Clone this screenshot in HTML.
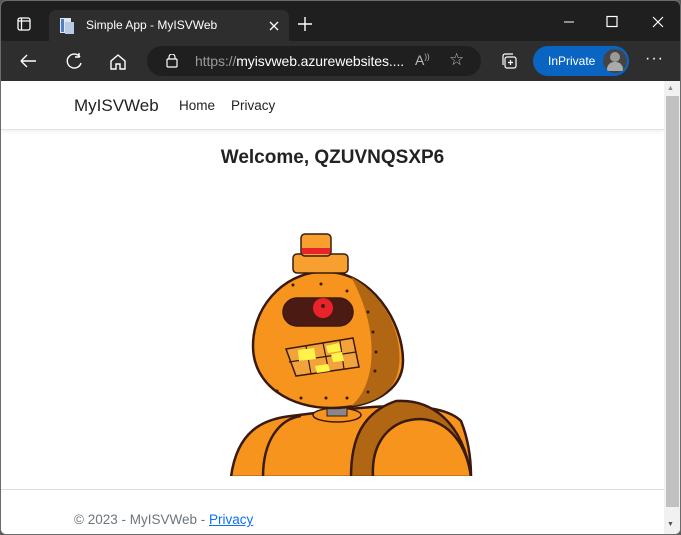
<!DOCTYPE html>
<html><head><style>
*{margin:0;padding:0;box-sizing:border-box}
body{width:681px;height:535px;overflow:hidden;background:#5a5a5a;font-family:"Liberation Sans",sans-serif;position:relative}
.win{position:absolute;left:0;top:0;width:681px;height:535px;border:1px solid #6b6b6b;border-radius:6px;overflow:hidden;background:#fff}
.title{position:absolute;left:0;top:0;width:681px;height:40px;background:#1f1f1f}
.tab{position:absolute;left:48px;top:9px;width:240px;height:31px;background:#2e2e2e;border-radius:7px 7px 0 0;color:#fff;font-size:12px;white-space:nowrap}
.tool{position:absolute;left:0;top:40px;width:681px;height:40px;background:#2e2e2e}
.url{position:absolute;left:146px;top:5px;width:334px;height:30px;background:#1f1f1f;border-radius:15px;white-space:nowrap}
.page{position:absolute;left:0;top:80px;width:663px;height:455px;background:#fff}
.nav{position:absolute;left:0;top:0;width:663px;height:49px;border-bottom:1px solid #e2e2e2;box-shadow:0 2px 4px rgba(0,0,0,.06)}
.sb{position:absolute;left:663px;top:80px;width:17px;height:455px;background:#f1f1f1}
</style></head><body>
<div class="win">
<div class="title">
 <svg style="position:absolute;left:16px;top:16px" width="14" height="14"><rect x="1" y="1" width="12" height="12" rx="2" fill="none" stroke="#fff" stroke-width="1.3"/><line x1="4.5" y1="1" x2="4.5" y2="13" stroke="#fff" stroke-width="1.3"/><line x1="1" y1="4" x2="13" y2="4" stroke="#fff" stroke-width="1.3"/></svg>
 <div class="tab">
  <svg style="position:absolute;left:11px;top:8px" width="14" height="16"><rect x="0" y="0" width="11" height="15" fill="#dfe7f3"/><rect x="5" y="4" width="9" height="12" fill="#b8cbe6"/><rect x="1" y="1" width="3" height="13" fill="#4f7fc0"/></svg>
  <span style="position:absolute;left:37px;top:8px">Simple App - MyISVWeb</span>
  <svg style="position:absolute;left:220px;top:11px" width="10" height="10"><path d="M1 1L9 9M9 1L1 9" stroke="#fff" stroke-width="1.3"/></svg>
 </div>
 <svg style="position:absolute;left:296px;top:15px" width="16" height="16"><path d="M8 1V15M1 8H15" stroke="#fff" stroke-width="1.4"/></svg>
 <svg style="position:absolute;left:560px;top:14px" width="110" height="14"><path d="M3 7H13" stroke="#fff"/><rect x="46" y="1.5" width="10" height="10" fill="none" stroke="#fff" stroke-width="1.2"/><path d="M92 2L102 12M102 2L92 12" stroke="#fff" stroke-width="1.2"/></svg>
</div>
<div class="tool">
 <svg style="position:absolute;left:18px;top:11px" width="110" height="20" fill="none" stroke="#fff" stroke-width="1.4"><path d="M2 9H17M2 9L8 3M2 9L8 15"/><path d="M61 5A7 7 0 1 0 62 11M60 1V5H56"/><path d="M92 17V9L99 3L106 9V17H101V12H97V17Z"/></svg>
 <div class="url">
  <svg style="position:absolute;left:19px;top:8px" width="12" height="14" fill="none" stroke="#fff" stroke-width="1.2"><rect x="1" y="5" width="10" height="8" rx="1"/><path d="M3 5V3A3 3 0 0 1 9 3V5"/></svg>
  <span style="position:absolute;left:48px;top:7px;font-size:14px;color:#9a9a9a;letter-spacing:-0.1px">https://<span style="color:#fff">myisvweb.azurewebsites....</span></span>
  <span style="position:absolute;left:268px;top:6px;font-size:14px;color:#bbb">A<sup style="font-size:8px">))</sup></span>
  <span style="position:absolute;left:302px;top:4px;font-size:17px;color:#bbb">☆</span>
 </div>
 <svg style="position:absolute;left:500px;top:12px" width="16" height="16" fill="none" stroke="#fff" stroke-width="1.2"><rect x="4" y="4" width="11" height="11" rx="2"/><path d="M2 12V3A2 2 0 0 1 4 1H12M9.5 7V12M7 9.5H12"/></svg>
 <div style="position:absolute;left:532px;top:5px;width:96px;height:30px;border-radius:15px;background:#0a65c2;color:#fff;font-size:12px"><span style="position:absolute;left:15px;top:8px">InPrivate</span><div style="position:absolute;left:70px;top:3px;width:24px;height:24px;border-radius:50%;background:#444;"><div style="position:absolute;left:7px;top:3px;width:10px;height:10px;border-radius:50%;background:#9a9a9a"></div><div style="position:absolute;left:4px;top:13px;width:16px;height:9px;border-radius:8px 8px 2px 2px;background:#aaa"></div></div></div>
 <span style="position:absolute;left:644px;top:9px;color:#fff;font-size:16px;letter-spacing:1px">···</span>
</div>
<div class="page">
 <div class="nav">
  <span style="position:absolute;left:73px;top:15px;font-size:17px;color:#222">MyISVWeb</span>
  <span style="position:absolute;left:178px;top:17px;font-size:13.5px;color:#222">Home</span>
  <span style="position:absolute;left:230px;top:17px;font-size:13.5px;color:#222">Privacy</span>
 </div>
 <div style="position:absolute;left:0;top:66px;width:663px;text-align:center;font-size:19px;font-weight:bold;color:#222">Welcome, QZUVNQSXP6</div>
 <svg style="position:absolute;left:0;top:0" width="663" height="395" viewBox="0 80 663 395">
  <g stroke="#3a1a10" stroke-width="2.5">
   <path d="M230 476C236 430 262 418 290 415L330 410C380 404 440 400 460 420C468 440 470 460 470 476Z" fill="#f7941d"/>
   <path d="M350 476C350 440 360 412 395 400C430 398 462 420 470 476Z" fill="#b16614"/>
   <path d="M372 476C370 440 390 418 420 418C450 420 466 446 470 476Z" fill="#f7941d"/>
   <path d="M262 476C262 440 278 418 300 415" fill="none"/>
   <ellipse cx="336" cy="414" rx="24" ry="7" fill="#f7941d" stroke-width="1.5"/>
   <rect x="326" y="406" width="20" height="9" fill="#888" stroke-width="1"/>
   <path d="M327 271C290 268 252 300 252 345C252 385 290 407 330 407C370 407 402 390 402 360C402 320 370 272 327 271Z" fill="#f7941d"/>
   <path d="M350 276C385 295 402 335 398 365C395 390 375 402 350 405C375 385 380 330 350 276Z" fill="#b16614" stroke="none"/>
   <rect x="282" y="297" width="70" height="28" rx="14" fill="#4b1a12" stroke-width="1.5"/>
   <path d="M285 348L352 337L358 366L295 375Z" fill="#f3a33c" stroke-width="1.5"/>
   <path d="M288 361L355 351M305 345L310 373M322 342L328 371M339 340L343 368" stroke-width="1.2" fill="none"/>
   <rect x="292" y="253" width="55" height="19" rx="4" fill="#f7a030" stroke-width="1.5"/>
   <rect x="300" y="233" width="30" height="22" rx="4" fill="#f7a030" stroke-width="1.5"/>
  </g>
  <rect x="301" y="247" width="28" height="6" fill="#e8232a"/>
  <circle cx="322" cy="307" r="10" fill="#e8232a"/><circle cx="322" cy="305" r="2" fill="#4b1a12"/>
  <path d="M297 349L313 347L315 358L298 360ZM314 365L327 363L329 370L316 372ZM330 353L341 351L343 360L332 361ZM325 345L338 342L340 350L327 352Z" fill="#fff34a"/>
  <g fill="#3a1a10"><circle cx="320" cy="283" r="1.5"/><circle cx="346" cy="290" r="1.5"/><circle cx="367" cy="311" r="1.5"/><circle cx="372" cy="331" r="1.5"/><circle cx="375" cy="351" r="1.5"/><circle cx="374" cy="370" r="1.5"/><circle cx="367" cy="391" r="1.5"/><circle cx="346" cy="397" r="1.5"/><circle cx="325" cy="397" r="1.5"/><circle cx="300" cy="397" r="1.5"/><circle cx="276" cy="390" r="1.5"/><circle cx="292" cy="284" r="1.5"/></g>
 </svg>
 <div style="position:absolute;left:0;top:408px;width:663px;border-top:1px solid #dedede"></div>
 <div style="position:absolute;left:73px;top:431px;font-size:13.5px;color:#6c757d">© 2023 - MyISVWeb - <span style="color:#0d6efd;text-decoration:underline">Privacy</span></div>
</div>
<div class="sb"><div style="position:absolute;left:3px;top:4px;font-size:7px;color:#888">▲</div><div style="position:absolute;left:2px;top:15px;width:13px;height:411px;background:#c1c1c1"></div><div style="position:absolute;left:3px;top:440px;font-size:7px;color:#555">▼</div></div>
</div>
</body></html>
